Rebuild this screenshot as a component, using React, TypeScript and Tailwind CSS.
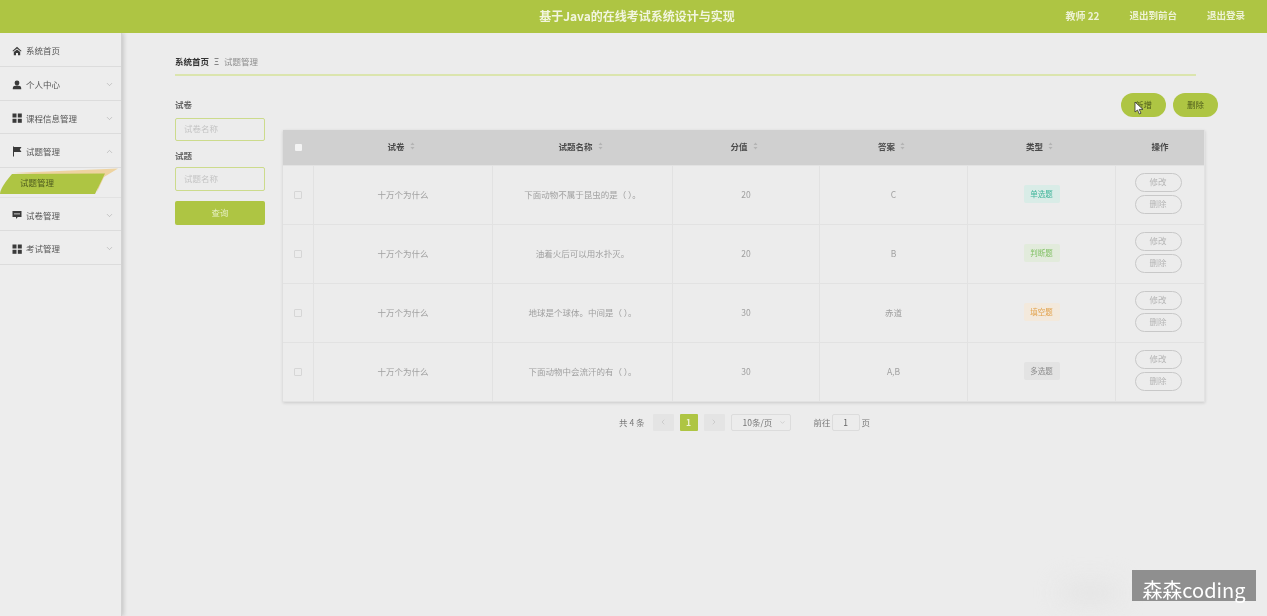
import React from "react";
import { ChevronDown, ChevronUp, ChevronLeft, ChevronRight } from "lucide-react";

const font = { fontFamily: '"Noto Sans CJK SC", "Liberation Sans", sans-serif' };

function Grid2() {
  return (
    <svg width="10" height="10" viewBox="0 0 10 10" fill="#3a3a3a">
      <rect x="0.5" y="0.5" width="4" height="4" />
      <rect x="5.8" y="0.5" width="4" height="4" />
      <rect x="0.5" y="5.8" width="4" height="4" />
      <rect x="5.8" y="5.8" width="4" height="4" />
    </svg>
  );
}
function HomeI() {
  return (
    <svg width="10" height="10" viewBox="0 0 10 10" fill="#3a3a3a">
      <path d="M5 .8 .4 5l.8.6L5 2.4l3.8 3.2.8-.6zM1.800 6 5 3.400 8.200 6v3.200H6V7H4v2.200H1.800z" />
    </svg>
  );
}
function UserI() {
  return (
    <svg width="10" height="10" viewBox="0 0 10 10" fill="#3a3a3a">
      <circle cx="5" cy="3" r="2.4" />
      <path d="M.8 8c0-1.600 2-2.400 4.200-2.400S9.200 6.400 9.200 8v1.200H.8z" />
    </svg>
  );
}
function FlagI() {
  return (
    <svg width="10" height="11" viewBox="0 0 10 11" fill="#3a3a3a">
      <rect x="1" y="0.5" width="1" height="10" />
      <path d="M2 1h7.500L7.800 3.500 9.500 6H2z" />
    </svg>
  );
}
function MsgI() {
  return (
    <svg width="10" height="10" viewBox="0 0 10 10" fill="#3a3a3a">
      <path d="M.5 1h9v6H5.800L4 9V7H.5z" />
      <rect x="2" y="3.500" width="6" height="0.8" fill="#ececec" />
    </svg>
  );
}

function NavItem({ icon, label, chevron, h }: { icon: React.ReactNode; label: string; chevron?: "down" | "up"; h: string }) {
  return (
    <div className={`flex items-center pl-[12px] pr-[7px] pt-[2px] border-b border-[#dcdcdc] ${h}`}>
      <span className="w-[14px] flex items-center">{icon}</span>
      <span className="text-[8.5px] text-[#555] flex-1">{label}</span>
      {chevron === "down" && <ChevronDown size={9} color="#a5a5a5" strokeWidth={1.5} />}
      {chevron === "up" && <ChevronUp size={9} color="#a5a5a5" strokeWidth={1.5} />}
    </div>
  );
}

const rows = [
  { t: "下面动物不属于昆虫的是（ ）。", s: "20", a: "C", k: "单选题", cls: "bg-[#d9ece7] text-[#3fb59a]" },
  { t: "油着火后可以用水扑灭。", s: "20", a: "B", k: "判断题", cls: "bg-[#e2ebdc] text-[#84c268]" },
  { t: "地球是个球体。中间是（ ）。", s: "30", a: "赤道", k: "填空题", cls: "bg-[#f3e9dc] text-[#e2a24c]" },
  { t: "下面动物中会流汗的有（ ）。", s: "30", a: "A,B", k: "多选题", cls: "bg-[#e3e3e3] text-[#8c8c8c]" },
];

const cols = "grid grid-cols-[31px_179px_180px_147px_148px_148px_89px]";

function Sort() {
  return (
    <svg width="5" height="8" viewBox="0 0 5 8" className="ml-[5px]" fill="#b4b4b4">
      <path d="M2.5 .5 4.5 3H.5zM2.5 7.500 .5 5h4z" />
    </svg>
  );
}

const cell = "flex items-center justify-center border-r border-[#e2e2e2] pb-[2px]";
const head = "flex justify-center items-center pr-[5px]";

export default function App() {
  return (
    <div className="relative w-[1267px] h-[616px] overflow-hidden bg-[#ececec] blur-[0.5px]" style={font}>
      <header className="h-[33px] bg-[#aec543] flex items-center relative">
        <div className="flex-1 text-center text-[12px] font-bold text-[#f2f5df] pl-[7px] pb-[2px]">基于Java的在线考试系统设计与实现</div>
        <div className="absolute right-[22px] top-0 h-full flex items-center gap-[30px] text-[9.5px] font-bold text-[#eef2d6] pb-[3px]">
          <span className="text-[10px]">教师 22</span>
          <span>退出到前台</span>
          <span>退出登录</span>
        </div>
      </header>
      <div className="flex h-[583px]">
        <aside className="w-[122px] h-full bg-[#ededed] border-r border-[#d2d2d2] shadow-[2px_0_4px_rgba(0,0,0,0.15)] shrink-0">
          <NavItem h="h-[34px]" icon={<HomeI />} label="系统首页" />
          <NavItem h="h-[34px]" icon={<UserI />} label="个人中心" chevron="down" />
          <NavItem h="h-[33px]" icon={<Grid2 />} label="课程信息管理" chevron="down" />
          <NavItem h="h-[34px]" icon={<FlagI />} label="试题管理" chevron="up" />
          <div className="relative h-[30px] border-b border-[#e2e2e2] flex items-center pl-[20px]">
            <svg className="absolute left-0 top-0" width="122" height="30" viewBox="0 0 122 30">
              <path d="M12 5 L118 0.5 L104 9 L97 24 L100 9 Z" fill="#eed3a0" />
              <path d="M12 6 L105 5.5 L95 26 L0 26 Q0 20 12 6 Z" fill="#aec543" />
            </svg>
            <span className="relative text-[8.5px] text-[#4d5a1e]">试题管理</span>
          </div>
          <NavItem h="h-[33px]" icon={<MsgI />} label="试卷管理" chevron="down" />
          <NavItem h="h-[34px]" icon={<Grid2 />} label="考试管理" chevron="down" />
        </aside>
        <main className="flex-1 pl-[53px] pt-[20px]">
          <div className="w-[1021px] h-[23px] border-b-2 border-[#dbe5ae] flex items-center text-[8.5px] pb-[5px]">
            <span className="font-bold text-[#333]">系统首页</span>
            <span className="mx-[5px] text-[#666]">Ξ</span>
            <span className="text-[#8c8c8c]">试题管理</span>
          </div>
          <div className="flex mt-[17px]">
            <div className="w-[90px] shrink-0 pt-[5px]">
              <div className="text-[8.5px] font-bold text-[#666] leading-[12px]">试卷</div>
              <div className="mt-[8px] h-[23px] border border-[#ccdb8c] rounded-[2px] flex items-center pl-[8px] text-[8.5px] text-[#c4c4c4] pb-[2px]">试卷名称</div>
              <div className="mt-[8px] text-[8.5px] font-bold text-[#666] leading-[12px]">试题</div>
              <div className="mt-[6px] h-[24px] border border-[#ccdb8c] rounded-[2px] flex items-center pl-[8px] text-[8.5px] text-[#c4c4c4] pb-[2px]">试题名称</div>
              <div className="mt-[10px] h-[24px] bg-[#aec543] rounded-[2px] flex items-center justify-center text-[8.5px] text-[#e6efc0] pb-[2px]">查询</div>
            </div>
            <div className="ml-[18px] w-[935px]">
              <div className="flex justify-end gap-[7px] h-[37px]">
                <div className="relative w-[45px] h-[24px] rounded-full bg-[#aec543] flex items-center justify-center text-[8.5px] text-[#4f5d1c] pb-[1px]">
                  新增
                  <svg className="absolute left-[13px] top-[8px]" width="10" height="14" viewBox="0 0 10 14">
                    <path d="M1 1v10l2.500-2 1.800 4 1.700-.8-1.800-3.800H9z" fill="#fff" stroke="#333" strokeWidth="0.8" />
                  </svg>
                </div>
                <div className="w-[45px] h-[24px] rounded-full bg-[#aec543] flex items-center justify-center text-[8.5px] text-[#4f5d1c] pb-[1px]">删除</div>
              </div>
              <div className="w-[922px] shadow-[0_1px_3px_rgba(0,0,0,0.15)] border-b border-r border-[#e2e2e2]">
                <div className={`${cols} h-[35px] bg-[#d0d0d0] text-[8.5px] font-bold text-[#4a4a4a] items-center text-center pb-[3px]`}>
                  <div className="flex justify-center pt-[3px]"><span className="w-[7px] h-[7px] bg-[#f3f3f3] rounded-[1px]" /></div>
                  <div className={head}>试卷<Sort /></div>
                  <div className={head}>试题名称<Sort /></div>
                  <div className={head}>分值<Sort /></div>
                  <div className={head}>答案<Sort /></div>
                  <div className={head}>类型<Sort /></div>
                  <div className="pr-[1px]">操作</div>
                </div>
                {rows.map((r, i) => (
                  <div key={i} className={`${cols} h-[59px] border-t border-[#e2e2e2] text-[8.5px] text-[#a0a0a0] text-center`}>
                    <div className="flex items-center justify-center border-r border-[#e2e2e2]">
                      <span className="w-[8px] h-[8px] border border-[#d6d6d6] rounded-[1px]" />
                    </div>
                    <div className={cell}>十万个为什么</div>
                    <div className={cell}>{r.t}</div>
                    <div className={cell}>{r.s}</div>
                    <div className={cell}>{r.a}</div>
                    <div className={cell}>
                      <span className={`w-[36px] h-[18px] rounded-[2px] flex items-center justify-center text-[7.5px] pb-[1px] ${r.cls}`}>{r.k}</span>
                    </div>
                    <div className="flex flex-col items-center justify-center gap-[3px] pb-[4px] pl-[1px] pr-[6px]">
                      <span className="w-[47px] h-[19px] rounded-full border border-[#c8c8c8] flex items-center justify-center text-[#b5b5b5] pb-[1px]">修改</span>
                      <span className="w-[47px] h-[19px] rounded-full border border-[#c8c8c8] flex items-center justify-center text-[#b5b5b5] pb-[1px]">删除</span>
                    </div>
                  </div>
                ))}
              </div>
              <div className="w-[922px] flex items-center mt-[11px] h-[18px] pl-[336px] text-[8.5px] text-[#777]">
                <span>共 4 条</span>
                <span className="ml-[8px] w-[21px] h-[17px] bg-[#e4e4e4] rounded-[1px] flex items-center justify-center"><ChevronLeft size={8} color="#c0c0c0" /></span>
                <span className="ml-[6px] w-[18px] h-[17px] bg-[#aec543] rounded-[1px] flex items-center justify-center text-[#eef2d6] font-bold">1</span>
                <span className="ml-[6px] w-[21px] h-[17px] bg-[#e4e4e4] rounded-[1px] flex items-center justify-center"><ChevronRight size={8} color="#c0c0c0" /></span>
                <span className="ml-[6px] w-[60px] h-[17px] border border-[#dcdcdc] rounded-[2px] flex items-center pl-[11px] pr-[4px] justify-between">10条/页<ChevronDown size={7} color="#c0c0c0" /></span>
                <span className="ml-[23px]">前往</span>
                <span className="ml-[1px] w-[28px] h-[17px] border border-[#dcdcdc] rounded-[2px] flex items-center justify-center text-[#666]">1</span>
                <span className="ml-[2px]">页</span>
              </div>
            </div>
          </div>
        </main>
      </div>
      <div className="absolute left-[1060px] top-[584px] w-[60px] h-[18px] rounded-full bg-[#e3e3e3] blur-md" />
      <div className="absolute left-[1132px] top-[570px] w-[124px] h-[31px] bg-[#8f8f8f] text-white text-[20px] leading-[20px] flex items-center justify-center pt-[8px]" style={{ fontFamily: '"Noto Sans CJK SC", sans-serif' }}>森森coding</div>
    </div>
  );
}
